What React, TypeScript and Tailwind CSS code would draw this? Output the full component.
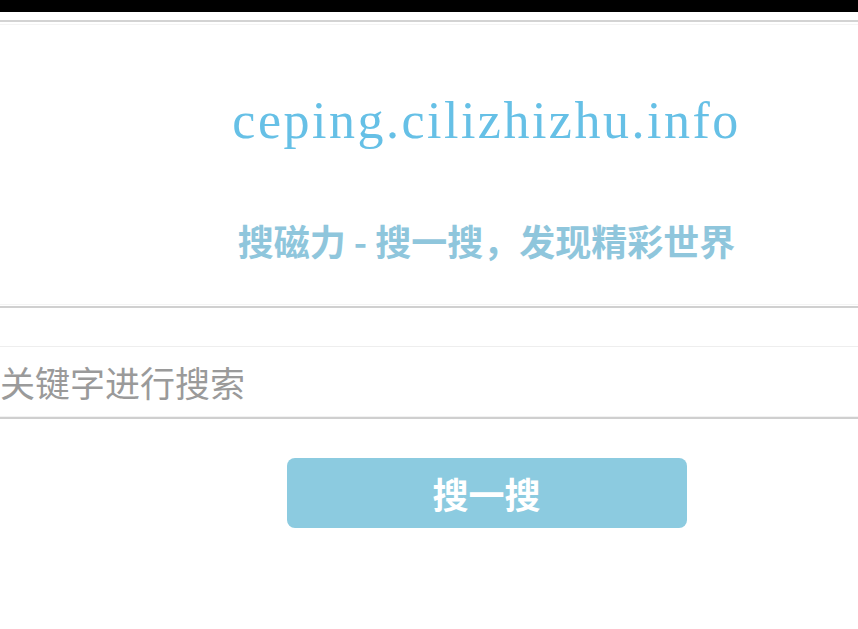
import React from 'react';

const serif = { fontFamily: '"Liberation Serif", "Noto Serif CJK SC", serif' };
const cjk = { fontFamily: '"Noto Sans CJK SC", "Noto Sans", sans-serif' };

const App: React.FC = () => {
  return (
    <div className="min-h-screen w-full bg-white overflow-hidden">
      <div className="h-3 bg-black" />
      <div className="h-2" />
      <div className="h-[2px] bg-[#d3d3d3]" />
      <div className="h-[2px]" />
      <div className="h-px bg-[#f4f4f4]" />

      <header className="flex flex-col items-center pl-[115px]">
        <h1
          className="mt-[66px] text-[52px] leading-[60px] tracking-[2.5px] text-[#66c0e6]"
          style={serif}
        >
          ceping.cilizhizhu.info
        </h1>
        <p
          className="mt-[67px] text-[36px] leading-[44px] font-bold text-[#8fc6dc]"
          style={cjk}
        >
          搜磁力 - 搜一搜，发现精彩世界
        </p>
      </header>

      <div className="mt-[42px] h-px bg-[#f4f4f4]" />
      <div className="h-px" />
      <div className="h-[2px] bg-[#d0d0d0]" />

      <form className="mt-[38px]" onSubmit={e => e.preventDefault()}>
        <div className="border-t border-[#eeeeee]">
          <input
            type="text"
            placeholder="关键字进行搜索"
            className="block w-full h-[69px] px-0 text-[35px] text-[#444] placeholder:text-[#9a9a9a] outline-none bg-white"
            style={cjk}
          />
        </div>
        <div className="h-px bg-[#f2f2f2]" />
        <div className="h-[2px] bg-[#cfcfcf]" />

        <div className="mt-[39px] flex justify-center pl-[115px]">
          <button
            type="submit"
            className="w-[400px] h-[70px] rounded-lg bg-[#8ccbe0] text-white text-[36px] font-bold"
            style={cjk}
          >
            搜一搜
          </button>
        </div>
      </form>
    </div>
  );
};

export default App;
